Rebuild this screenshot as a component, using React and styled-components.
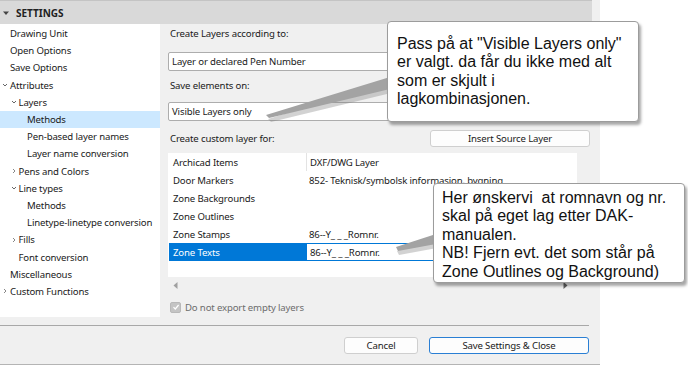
import styled, { createGlobalStyle } from "styled-components";

const GlobalStyle = createGlobalStyle`
  html, body {
    margin: 0;
    padding: 0;
    background: #ffffff;
  }
  body {
    font-family: "Noto Sans", "Open Sans", sans-serif;
    font-size: 9.6px;
    letter-spacing: -0.15px;
    color: #1a1a1a;
  }
`;

const treeItems = [
  { label: "Drawing Unit", level: 0 },
  { label: "Open Options", level: 0 },
  { label: "Save Options", level: 0 },
  { label: "Attributes", level: 0, toggle: "open" },
  { label: "Layers", level: 1, toggle: "open" },
  { label: "Methods", level: 2, selected: true },
  { label: "Pen-based layer names", level: 2 },
  { label: "Layer name conversion", level: 2 },
  { label: "Pens and Colors", level: 1, toggle: "closed" },
  { label: "Line types", level: 1, toggle: "open" },
  { label: "Methods", level: 2 },
  { label: "Linetype-linetype conversion", level: 2 },
  { label: "Fills", level: 1, toggle: "closed" },
  { label: "Font conversion", level: 1 },
  { label: "Miscellaneous", level: 0 },
  { label: "Custom Functions", level: 0, toggle: "closed" },
];

const layerRows = [
  { item: "Door Markers", layer: "852- Teknisk/symbolsk informasjon, bygning" },
  { item: "Zone Backgrounds", layer: "" },
  { item: "Zone Outlines", layer: "" },
  { item: "Zone Stamps", layer: "86--Y_ _ _Romnr." },
  { item: "Zone Texts", layer: "86--Y_ _ _Romnr.", selected: true },
];

function Chevron({ open }) {
  return (
    <ToggleIcon>
      <svg width="6" height="6" viewBox="0 0 6 6">
        {open ? (
          <path d="M1 2 L3 4 L5 2" fill="none" stroke="#666" strokeWidth="1" />
        ) : (
          <path d="M2 1 L4 3 L2 5" fill="none" stroke="#888" strokeWidth="1" />
        )}
      </svg>
    </ToggleIcon>
  );
}

function ScrollArrow({ dir }) {
  return (
    <svg width="5" height="7" viewBox="0 0 5 7">
      {dir === "left" ? (
        <path d="M4.5 0 L4.5 7 L0.5 3.5 Z" fill="#a0a0a0" />
      ) : (
        <path d="M0.5 0 L0.5 7 L4.5 3.5 Z" fill="#606060" />
      )}
    </svg>
  );
}

export default function App() {
  return (
    <>
      <GlobalStyle />
      <Page>
        <Dialog>
          <Header>
            <svg width="8" height="6" viewBox="0 0 8 6">
              <path d="M1 1.5 L7 1.5 L4 5 Z" fill="#444" />
            </svg>
            <HeaderTitle>SETTINGS</HeaderTitle>
          </Header>

          <Body>
            <Tree>
              {treeItems.map((t, i) => (
                <TreeRow key={i} $level={t.level} $selected={t.selected}>
                  {t.toggle && <Chevron open={t.toggle === "open"} />}
                  {t.label}
                </TreeRow>
              ))}
            </Tree>

            <Content>
              <Label>Create Layers according to:</Label>
              <Select $top={8}>Layer or declared Pen Number</Select>
              <Label $top={5}>Save elements on:</Label>
              <Select $top={6}>Visible Layers only</Select>

              <CustomRow>
                <Label>Create custom layer for:</Label>
                <Button $width={160}>Insert Source Layer</Button>
              </CustomRow>

              <Table>
                <TableRow>
                  <Cell $first>Archicad Items</Cell>
                  <Cell $divider>DXF/DWG Layer</Cell>
                </TableRow>
                {layerRows.map((r) => (
                  <TableRow key={r.item}>
                    <Cell $first $selected={r.selected}>
                      {r.item}
                    </Cell>
                    <Cell $editing={r.selected}>{r.layer}</Cell>
                  </TableRow>
                ))}
              </Table>

              <ScrollRow>
                <ScrollArrow dir="left" />
                <ScrollArrow dir="right" />
              </ScrollRow>

              <CheckRow>
                <CheckBox>
                  <svg width="8" height="8" viewBox="0 0 8 8">
                    <path d="M1.5 4.2 L3.3 6 L6.6 2" fill="none" stroke="#fff" strokeWidth="1.2" />
                  </svg>
                </CheckBox>
                Do not export empty layers
              </CheckRow>
            </Content>
          </Body>

          <Footer>
            <Button $width={74}>Cancel</Button>
            <Button $width={160} $primary>
              Save Settings &amp; Close
            </Button>
          </Footer>
        </Dialog>

        <Pointer width="688" height="365" viewBox="0 0 688 365">
          <polygon points="390,79 390,91 270,120 267,117" fill="#7d7d7d" opacity="0.35" transform="translate(1,2)" />
          <polygon points="390,77 390,89 269,118 266,115" fill="#a3a3a3" />
          <polygon points="436,236 436,246 398,253 396,249" fill="#7d7d7d" opacity="0.35" transform="translate(1,2)" />
          <polygon points="436,234 436,244 398,251 396,247" fill="#a3a3a3" />
        </Pointer>

        <Callout $left={387} $top={21} $width={252} $height={101} $pad="13px 8px 0 9px">
          Pass på at "Visible Layers only" er valgt. da får du ikke med alt som er skjult i
          lagkombinasjonen.
        </Callout>
        <Callout $left={433} $top={183} $width={252} $height={100} $pad="5px 6px 0 8px">
          Her ønskervi&nbsp; at romnavn og nr. skal på eget lag etter DAK-manualen.
          <br />
          NB! Fjern evt. det som står på Zone Outlines og Background)
        </Callout>
      </Page>
    </>
  );
}

const Page = styled.div`
  position: relative;
  width: 688px;
  height: 365px;
  overflow: hidden;
`;

const Dialog = styled.div`
  width: 600px;
  height: 365px;
  background: #f0f0f0;
  display: flex;
  flex-direction: column;
  border-bottom: 1px solid #b4b4b4;
  box-sizing: border-box;
`;

const Header = styled.div`
  width: 592px;
  height: 24px;
  flex: none;
  background: #d9d9d9;
  border-top: 1px solid #c4c4c4;
  box-sizing: border-box;
  display: flex;
  align-items: center;
  gap: 6px;
  padding-left: 2px;
`;

const HeaderTitle = styled.span`
  font-weight: 700;
  font-size: 10px;
  letter-spacing: 0;
  color: #222;
`;

const Body = styled.div`
  display: flex;
  height: 293px;
  flex: none;
`;

const Tree = styled.div`
  width: 160px;
  background: #ffffff;
  padding-top: 1px;
  box-sizing: border-box;
`;

const TreeRow = styled.div`
  height: 17.2px;
  display: flex;
  align-items: center;
  padding-left: ${(p) => 10 + p.$level * 8.5}px;
  background: ${(p) => (p.$selected ? "#cce8ff" : "transparent")};
  white-space: nowrap;
`;

const ToggleIcon = styled.span`
  width: 8px;
  margin-left: -8px;
  display: flex;
  align-items: center;
`;

const Content = styled.div`
  flex: 1;
  padding: 0 10px 0 8px;
  display: flex;
  flex-direction: column;
`;

const Label = styled.div`
  height: 20px;
  line-height: 20px;
  padding-left: 2px;
  margin-top: ${(p) => p.$top || 0}px;
`;

const Select = styled.div`
  height: 19px;
  margin-top: ${(p) => p.$top || 0}px;
  background: #ffffff;
  border: 1px solid #adadad;
  border-radius: 2px;
  box-sizing: border-box;
  padding-left: 3px;
  display: flex;
  align-items: center;
`;

const CustomRow = styled.div`
  margin-top: 6px;
  height: 23px;
  display: flex;
  align-items: center;
  justify-content: space-between;
`;

const Button = styled.div`
  width: ${(p) => p.$width}px;
  height: 17px;
  box-sizing: border-box;
  background: #fdfdfd;
  border: 1px solid ${(p) => (p.$primary ? "#2a7fd4" : "#cfcfcf")};
  border-radius: 3px;
  display: flex;
  align-items: center;
  justify-content: center;
`;

const Table = styled.div`
  margin-top: 3px;
  height: 124px;
  margin-right: 13px;
  background: #ffffff;
`;

const TableRow = styled.div`
  height: 18px;
  display: flex;
`;

const Cell = styled.div`
  width: ${(p) => (p.$first ? "137px" : "auto")};
  flex: ${(p) => (p.$first ? "none" : "1")};
  box-sizing: border-box;
  display: flex;
  align-items: center;
  padding-left: ${(p) => (p.$first ? "4px" : "3px")};
  margin-left: ${(p) => (p.$first ? "1px" : "0")};
  white-space: nowrap;
  overflow: hidden;
  background: ${(p) => (p.$selected ? "#0078d7" : "transparent")};
  color: ${(p) => (p.$selected ? "#ffffff" : "inherit")};
  border-left: ${(p) => (p.$divider ? "1px solid #e3e3e3" : "none")};
  border: ${(p) => (p.$editing ? "1px solid #0078d7" : undefined)};
`;

const ScrollRow = styled.div`
  height: 16px;
  display: flex;
  align-items: center;
  justify-content: space-between;
  padding: 0 22px 0 5px;
`;

const CheckRow = styled.div`
  margin-top: 6px;
  height: 16px;
  display: flex;
  align-items: center;
  gap: 4px;
  padding-left: 2px;
  color: #6d6d6d;
`;

const CheckBox = styled.span`
  width: 11px;
  height: 11px;
  border-radius: 2px;
  background: #c4c4c4;
  border: 1px solid #b8b8b8;
  box-sizing: border-box;
  display: flex;
  align-items: center;
  justify-content: center;
`;

const Footer = styled.div`
  margin-top: 8px;
  width: 589px;
  border-top: 1px solid #a8a8a8;
  display: flex;
  justify-content: flex-end;
  gap: 11px;
  padding-top: 11px;
`;

const Pointer = styled.svg`
  position: absolute;
  left: 0;
  top: 0;
  pointer-events: none;
`;

const Callout = styled.div`
  position: absolute;
  left: ${(p) => p.$left}px;
  top: ${(p) => p.$top}px;
  width: ${(p) => p.$width}px;
  height: ${(p) => p.$height}px;
  box-sizing: border-box;
  padding: ${(p) => p.$pad};
  background: #ffffff;
  border: 1px solid #9c9c9c;
  border-radius: 4px;
  box-shadow: 2px 3px 3px rgba(0, 0, 0, 0.35);
  font-family: "Liberation Sans", Arial, sans-serif;
  font-size: 16px;
  letter-spacing: 0;
  line-height: 18.4px;
  color: #111;
`;
